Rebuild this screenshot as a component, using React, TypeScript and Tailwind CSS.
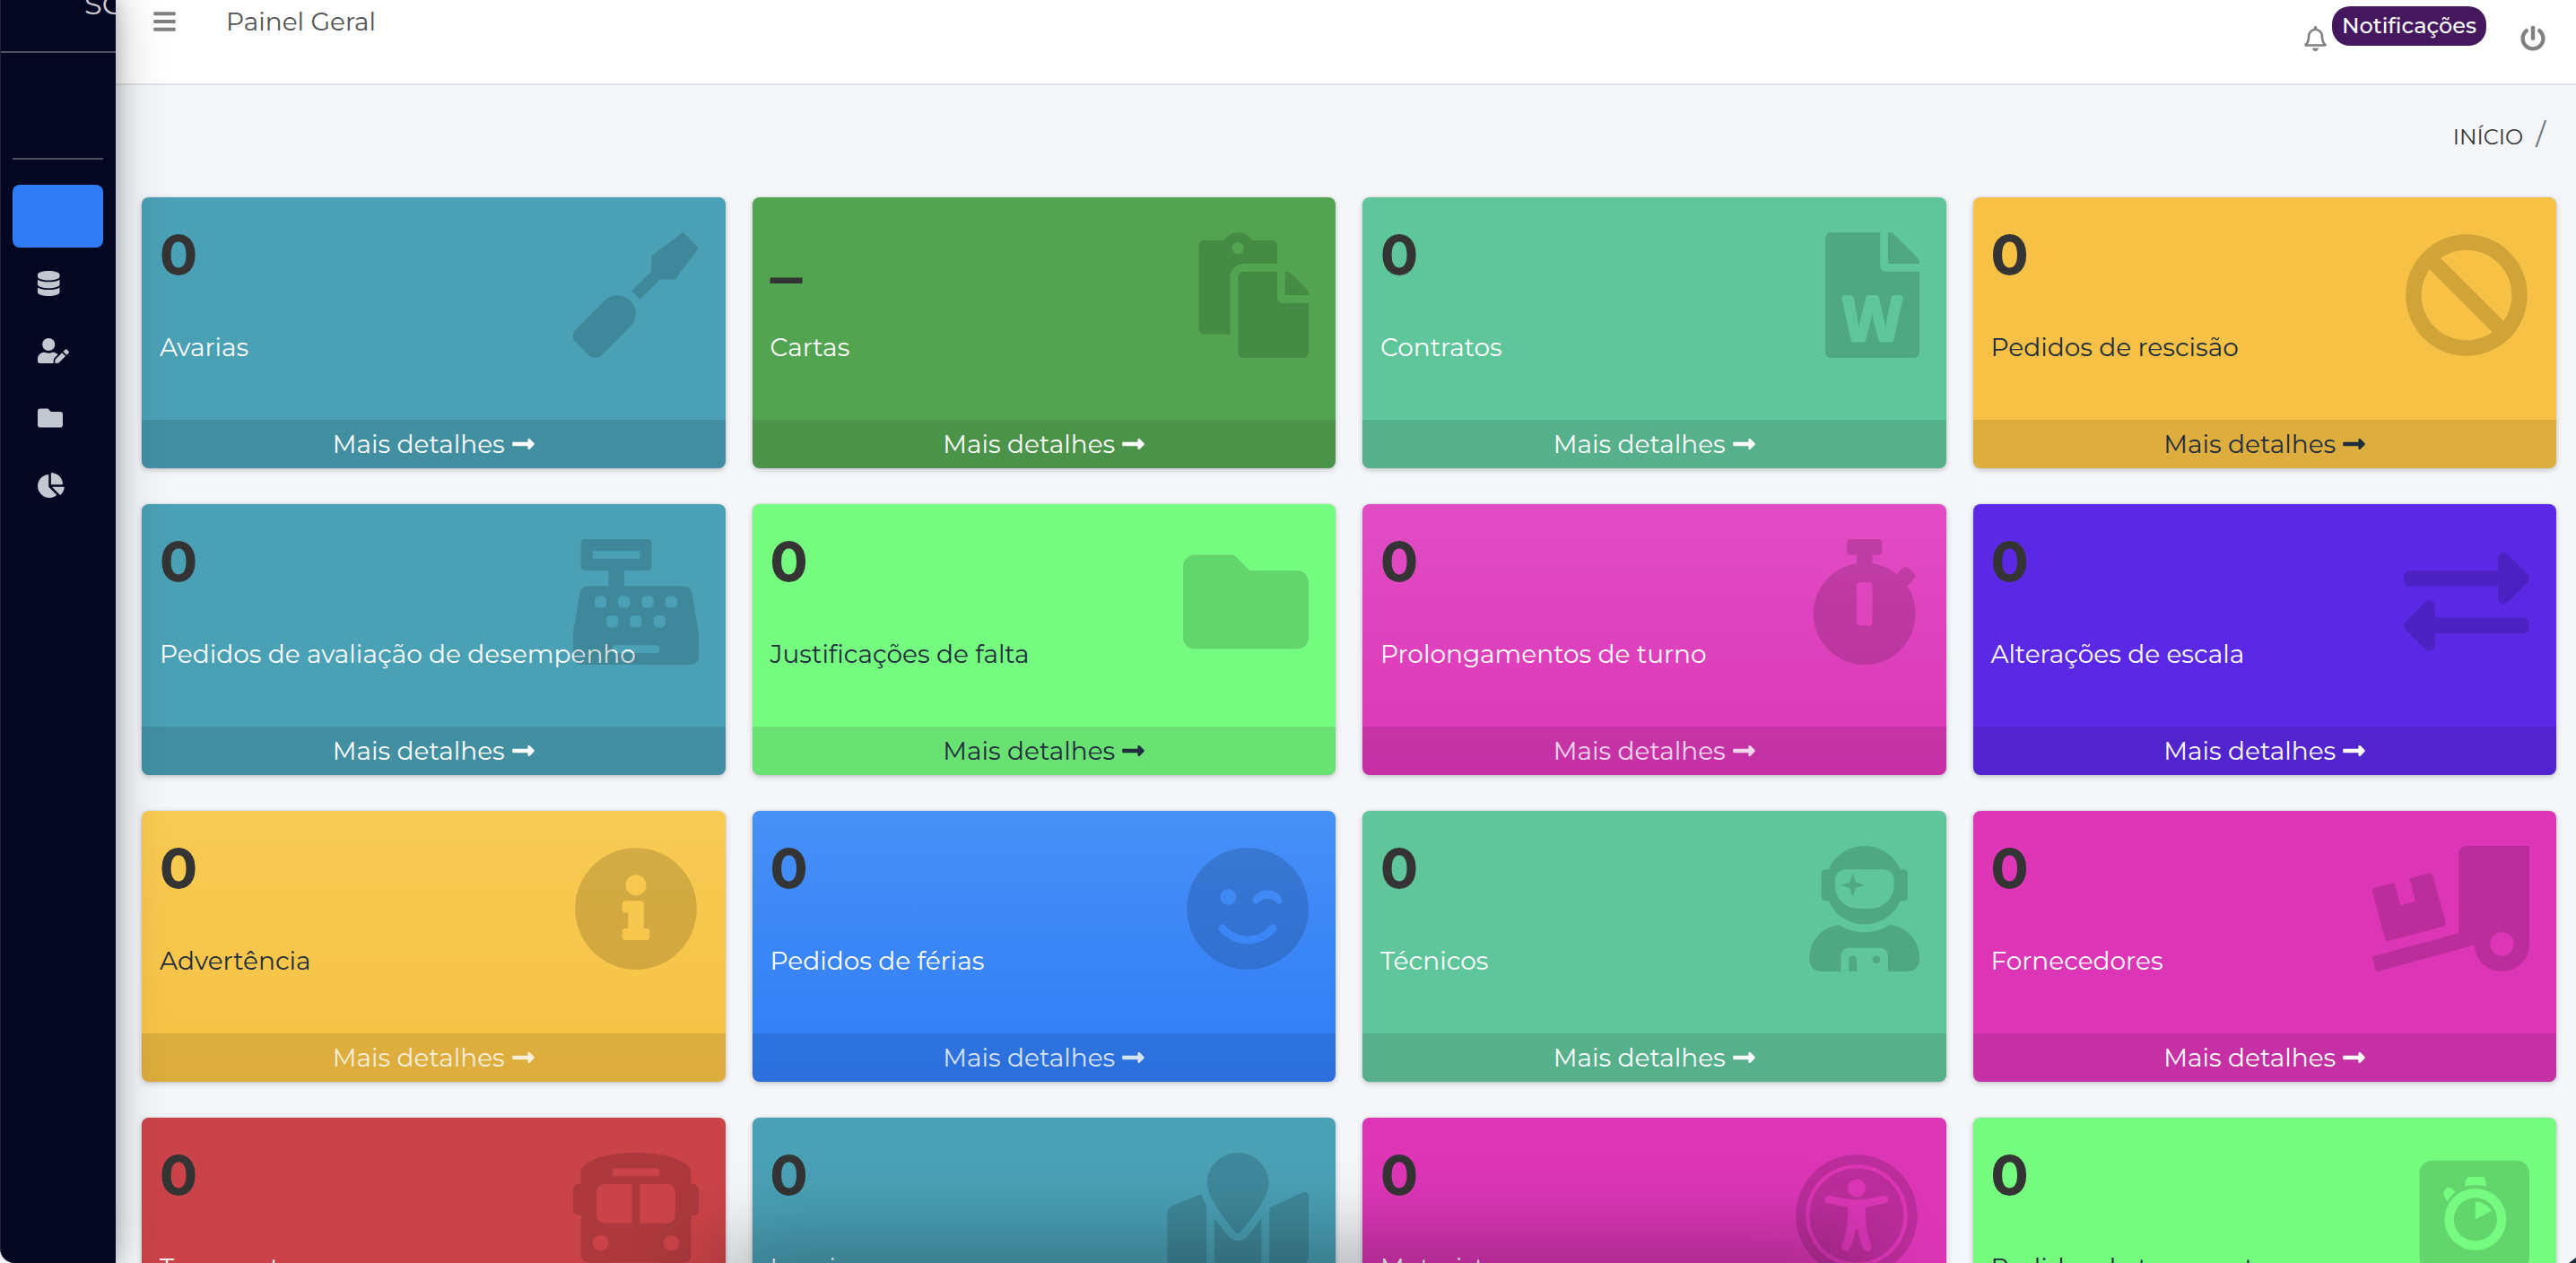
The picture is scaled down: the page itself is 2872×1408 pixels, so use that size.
import type { ComponentType, SVGProps } from "react";
import {
  FaBan,
  FaBars,
  FaBusAlt,
  FaCashRegister,
  FaChartPie,
  FaDatabase,
  FaExchangeAlt,
  FaFileWord,
  FaFolder,
  FaInfoCircle,
  FaLongArrowAltRight,
  FaMapMarked,
  FaPaste,
  FaPowerOff,
  FaRegBell,
  FaScrewdriver,
  FaSmileWink,
  FaStopwatch,
  FaTruckLoading,
  FaUniversalAccess,
  FaUserAstronaut,
  FaUserEdit,
} from "react-icons/fa";

type IconType = ComponentType<Pick<SVGProps<SVGSVGElement>, "className" | "preserveAspectRatio">>;

/** Rounded tile with a stopwatch cut out of it. */
function TimerTile(props: Pick<SVGProps<SVGSVGElement>, "className" | "preserveAspectRatio">) {
  return (
    <svg viewBox="0 0 448 512" fill="currentColor" aria-hidden="true" {...props}>
      <path
        fillRule="evenodd"
        d="M52 32h344a52 52 0 0 1 52 52v344a52 52 0 0 1-52 52H52a52 52 0 0 1-52-52V84a52 52 0 0 1 52-52z
           M199 99h62q10 6 11 38q-44-12-87 0q2-32 14-38z
           M118 141q18 4 29 20q-20 14-32 38q-16-14-16-34q4-18 19-24z
           M228 146a126 126 0 1 0 0 252a126 126 0 1 0 0-252z
           M228 184a88 88 0 1 1 0 176a88 88 0 1 1 0-176z
           M228 199q46 4 66 38l-66 35z"
      />
    </svg>
  );
}

type Card = {
  value: string;
  label: string;
  icon: IconType;
  tone: string;
  text: string;
  link: string;
};

const light = "text-white";
const dark = "text-[#1f2d3d]";
const faded = "text-white/80";

const teal = "bg-[#4aa0b5]";
const mint = "bg-[#5fc59b]";
const lime = "bg-[#75fb80]";
const pink = "bg-[#dc36b7]";

const cards: Card[] = [
  { value: "0", label: "Avarias", icon: FaScrewdriver, tone: teal, text: light, link: light },
  { value: "_", label: "Cartas", icon: FaPaste, tone: "bg-[#53a451]", text: light, link: light },
  { value: "0", label: "Contratos", icon: FaFileWord, tone: mint, text: light, link: light },
  { value: "0", label: "Pedidos de rescisão", icon: FaBan, tone: "bg-[#f6c144]", text: dark, link: dark },
  { value: "0", label: "Pedidos de avaliação de desempenho", icon: FaCashRegister, tone: teal, text: light, link: light },
  { value: "0", label: "Justificações de falta", icon: FaFolder, tone: lime, text: dark, link: dark },
  { value: "0", label: "Prolongamentos de turno", icon: FaStopwatch, tone: "bg-linear-to-b from-[#e14cc4] to-[#dc36b7]", text: light, link: faded },
  { value: "0", label: "Alterações de escala", icon: FaExchangeAlt, tone: "bg-[#5b29e6]", text: light, link: light },
  { value: "0", label: "Advertência", icon: FaInfoCircle, tone: "bg-linear-to-b from-[#f8cb52] to-[#f6c144]", text: dark, link: faded },
  { value: "0", label: "Pedidos de férias", icon: FaSmileWink, tone: "bg-linear-to-b from-[#4690f7] to-[#307cf6]", text: light, link: faded },
  { value: "0", label: "Técnicos", icon: FaUserAstronaut, tone: mint, text: light, link: light },
  { value: "0", label: "Fornecedores", icon: FaTruckLoading, tone: pink, text: light, link: light },
  { value: "0", label: "Transportes", icon: FaBusAlt, tone: "bg-[#ca4348]", text: light, link: light },
  { value: "0", label: "Locais", icon: FaMapMarked, tone: teal, text: light, link: light },
  { value: "0", label: "Motoristas", icon: FaUniversalAccess, tone: pink, text: light, link: light },
  { value: "0", label: "Pedidos de transporte", icon: TimerTile, tone: lime, text: dark, link: dark },
];

const navItems: { label: string; icon: IconType }[] = [
  { label: "Dados", icon: FaDatabase },
  { label: "Utilizadores", icon: FaUserEdit },
  { label: "Documentos", icon: FaFolder },
  { label: "Relatórios", icon: FaChartPie },
];

function StatCard({ value, label, icon: Icon, tone, text, link }: Card) {
  return (
    <article
      className={`relative flex h-[302px] flex-col overflow-hidden rounded-lg shadow-[0_0_2px_rgba(0,0,0,0.13),0_2px_6px_rgba(0,0,0,0.2)] ${tone} ${text}`}
    >
      <div className="grow px-5 pt-5">
        <h3
          className={`mb-[38px] leading-[88px] font-bold text-[#343434] ${value === "_" ? "text-[72px]" : "text-[62px]"}`}
        >
          {value}
        </h3>
        <p className="text-[28px] leading-[42px] whitespace-nowrap">{label}</p>
      </div>
      <Icon
        preserveAspectRatio="xMaxYMid"
        className="absolute top-[39px] right-[30px] h-[140px] w-[175px] text-black/15"
      />
      <a
        href="#"
        className={`flex h-[54px] items-center justify-center gap-2 bg-black/10 text-[28px] leading-[42px] ${link}`}
      >
        Mais detalhes
        <FaLongArrowAltRight className="h-7 w-[25px]" />
      </a>
    </article>
  );
}

function Sidebar() {
  return (
    <aside className="flex w-[129px] shrink-0 flex-col overflow-hidden rounded-bl-2xl border-l border-[#20243b] bg-[#040722] text-[#c2c7d0]">
      <a
        href="#"
        className="flex h-[59px] shrink-0 items-start border-b-2 border-[#4b545c] pl-[93px] text-[32px] leading-[9px] whitespace-nowrap text-white/80"
      >
        SC
      </a>
      <div className="mr-[14px] ml-[13px] h-[119px] shrink-0 border-b-2 border-[#4b545c]" />
      <nav className="mt-7 mr-[14px] ml-[13px] flex flex-col gap-[5px]">
        <a href="#" aria-label="Painel Geral" className="h-[70px] rounded-lg bg-[#307cf6]" />
        {navItems.map(({ label, icon: Icon }) => (
          <a key={label} href="#" aria-label={label} className="flex h-[70px] items-center pl-7">
            <Icon preserveAspectRatio="xMinYMid" className="h-7 w-9" />
          </a>
        ))}
      </nav>
    </aside>
  );
}

export default function App() {
  return (
    <div className="relative flex h-screen overflow-hidden bg-[#f4f6fa] font-['Montserrat','Inter',sans-serif]">
      <div className="relative z-20 flex shadow-[0_0_56px_rgba(0,0,0,0.25),0_0_20px_rgba(0,0,0,0.22)]">
        <Sidebar />
      </div>

      <div className="flex min-w-0 grow flex-col">
        <header className="flex h-[95px] shrink-0 items-start border-b-2 border-[#dee2e6] bg-white pr-[34px] pl-[42px] text-[#808080]">
          <button type="button" aria-label="Menu" className="pt-[10px]">
            <FaBars className="h-7 w-[25px]" />
          </button>
          <a href="#" className="ml-14 pt-[3px] text-[28px] leading-[42px] text-[#525252]">
            Painel Geral
          </a>
          <a href="#" className="ml-auto flex items-start gap-[6px]">
            <FaRegBell className="mt-[29px] h-7 w-[25px]" />
            <span className="mt-[7px] flex h-[44px] items-center rounded-[20px] bg-[#44175f] px-[11px] text-[24px] font-medium text-white">
              Notificações
            </span>
          </a>
          <button type="button" aria-label="Sair" className="ml-[38px] pt-[29px]">
            <FaPowerOff className="h-7 w-7" />
          </button>
        </header>

        <nav aria-label="Trilho" className="flex h-[125px] shrink-0 items-start justify-end gap-[14px] pt-[37px] pr-[34px]">
          <a href="#" className="text-[24px] leading-[42px] text-[#343434]">
            INÍCIO
          </a>
          <span className="text-[32px] leading-[36px] text-[#6c757d]">/</span>
        </nav>

        <main className="grid grid-cols-4 gap-x-[30px] gap-y-10 pr-[22px] pl-[29px]">
          {cards.map((card) => (
            <StatCard key={card.label} {...card} />
          ))}
        </main>
      </div>

      {/* Soft shade along the lower edge of the window */}
      <div className="pointer-events-none absolute inset-x-[28%] -bottom-10 z-10 h-10 rounded-full shadow-[0_0_90px_16px_rgba(0,0,0,0.35)]" />
      <svg viewBox="0 0 8 6" className="absolute right-0 bottom-0 z-10 h-[6px] w-2 fill-[#1f2d3d]" aria-hidden="true">
        <path d="M0 6 8 0v6z" />
      </svg>
    </div>
  );
}
